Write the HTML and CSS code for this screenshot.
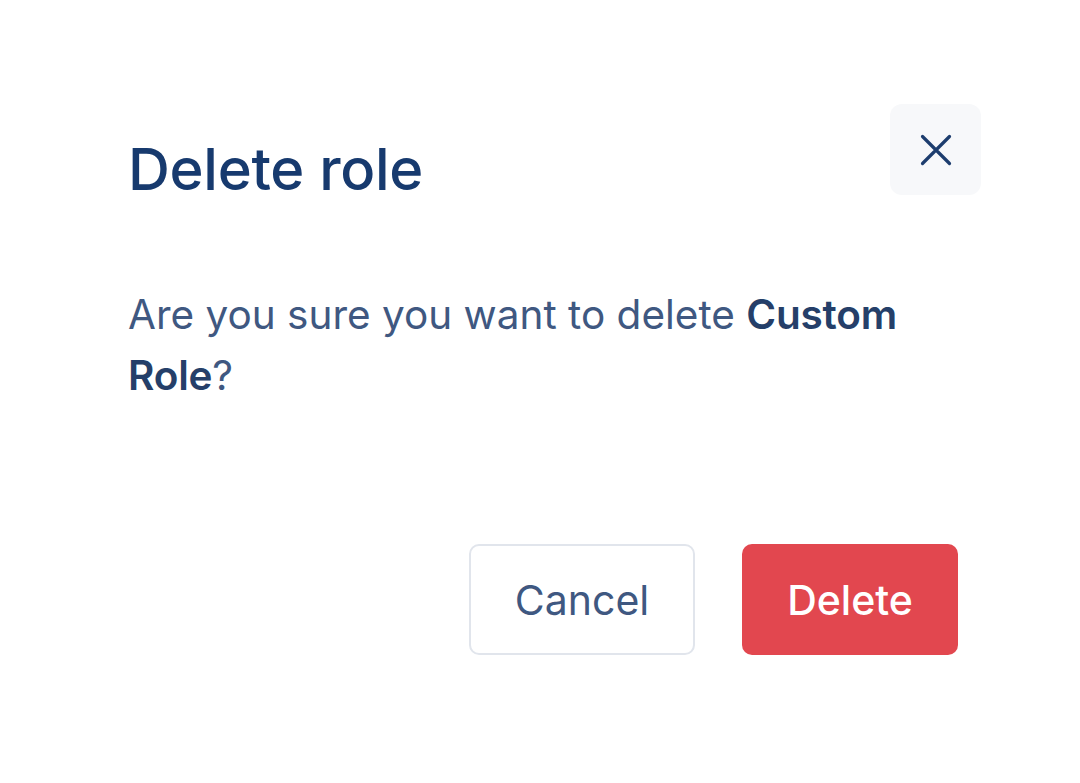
FILE: index.html
```html
<!DOCTYPE html>
<html>
<head>
<meta charset="utf-8">
<link rel="stylesheet" href="styles.css">
</head>
<body>
<div class="modal">
  <div class="modal-header">
    <h1 class="title">Delete role</h1>
    <button class="close" aria-label="Close">
      <svg width="32" height="32" viewBox="0 0 32 32" fill="none" stroke="currentColor" stroke-width="3.2" stroke-linecap="round"><path d="M2.5 2.5L29.5 29.5M29.5 2.5L2.5 29.5"/></svg>
    </button>
  </div>
  <p class="message">Are you sure you want to delete <strong>Custom</strong> <strong>Role</strong>?</p>
  <div class="actions">
    <button class="btn btn-cancel">Cancel</button>
    <button class="btn btn-delete">Delete</button>
  </div>
</div>
</body>
</html>
```
FILE: styles.css
```css
html, body {
  margin: 0;
  padding: 0;
  background: #ffffff;
}
body {
  font-family: Inter, "Noto Sans", sans-serif;
  width: 1080px;
  height: 783px;
  overflow: hidden;
}
.modal {
  position: relative;
  padding: 134px 122px 0 128px;
}
.modal-header {
  display: flex;
  align-items: flex-start;
}
.title {
  margin: 0;
  font-size: 58px;
  font-weight: 500;
  line-height: 70px;
  color: #173a6e;
  letter-spacing: -0.3px;
}
.close {
  position: absolute;
  top: 104px;
  right: 99px;
  width: 91px;
  height: 91px;
  border: none;
  border-radius: 12px;
  background: #f7f8fa;
  color: #1d3d6e;
  display: flex;
  align-items: center;
  justify-content: center;
  padding: 0;
}
.message {
  margin: 80px 0 0 0;
  font-size: 40.5px;
  line-height: 61px;
  color: #3f5881;
  font-weight: 400;
}
.message strong {
  font-weight: 600;
  color: #253f69;
  letter-spacing: -0.2px;
}
.actions {
  display: flex;
  justify-content: flex-end;
  gap: 47px;
  margin-top: 138px;
}
.btn {
  height: 111px;
  border-radius: 10px;
  font-family: Inter, "Noto Sans", sans-serif;
  font-size: 41px;
  padding: 0;
}
.btn-cancel {
  width: 226px;
  background: #ffffff;
  border: 2px solid #e1e5ec;
  color: #3f5881;
  font-weight: 400;
}
.btn-delete {
  width: 216px;
  background: #e2474f;
  border: none;
  color: #ffffff;
  font-weight: 500;
}
```
